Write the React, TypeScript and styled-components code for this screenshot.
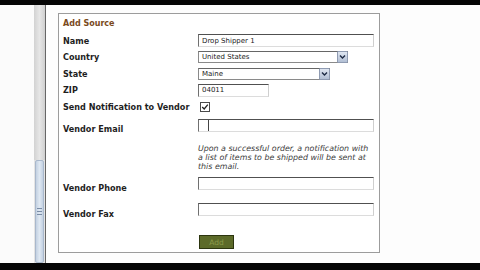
import React from "react";
import styled, { createGlobalStyle } from "styled-components";

const Global = createGlobalStyle`
  html, body { margin: 0; padding: 0; background: #fdfdfd; }
  body { font-family: "DejaVu Sans", Verdana, sans-serif; }
`;

const Screen = styled.div`
  width: 480px;
  height: 270px;
  display: flex;
  flex-direction: column;
  overflow: hidden;
  background: #fdfdfd;
`;

const BlackBar = styled.div<{ $h: number }>`
  height: ${(p) => p.$h}px;
  background: #050505;
  flex: none;
`;

const Middle = styled.div`
  flex: 1;
  display: flex;
  min-height: 0;
`;

const Gutter = styled.div`
  width: 34px;
  background: #fbfbfb;
  flex: none;
`;

const Track = styled.div`
  width: 11px;
  display: flex;
  flex-direction: column;
  background: #e4e4e4;
  flex: none;
`;

const TrackUpper = styled.div`
  height: 155px;
  background: linear-gradient(90deg, #d2d2d2, #e6e6e6 50%, #cfcfcf);
`;

const Thumb = styled.div`
  flex: 1;
  margin: 0 1px;
  border: 1px solid #a9b8cc;
  border-radius: 2px;
  background: linear-gradient(90deg, #c3d1e2, #dfe8f2 50%, #c3d1e2);
  display: flex;
  align-items: center;
  justify-content: center;
`;

const Grip = styled.div`
  width: 5px;
  height: 5px;
  border-top: 1px solid #7a8ca6;
  border-bottom: 1px solid #7a8ca6;
  position: relative;
  &::after {
    content: "";
    position: absolute;
    left: 0;
    right: 0;
    top: 2px;
    border-top: 1px solid #7a8ca6;
  }
`;

const Divider = styled.div`
  width: 1px;
  background: #666;
  flex: none;
`;

const Content = styled.div`
  flex: 1;
  padding: 8px 0 0 12px;
  background: #fdfdfd;
`;

const Panel = styled.div`
  border: 1px solid #9c9c9c;
  background: #ffffff;
  padding-left: 4px;
  box-sizing: border-box;
  width: 322px;
  height: 240px;
  display: flex;
  flex-direction: column;
`;

const Title = styled.div`
  height: 17px;
  display: flex;
  align-items: center;
  font-size: 8px;
  font-weight: bold;
  color: #7a4a1c;
  padding-top: 1px;
`;

const Row = styled.div<{ $h: number; $align?: string }>`
  height: ${(p) => p.$h}px;
  display: grid;
  grid-template-columns: 135px 1fr;
  align-items: ${(p) => p.$align || "center"};
`;

const Label = styled.div<{ $drop?: number }>`
  font-size: 8.1px;
  font-weight: bold;
  color: #1e1e1e;
  padding-top: ${(p) => p.$drop || 0}px;
  white-space: nowrap;
`;

const Field = styled.div<{ $top?: number }>`
  display: flex;
  align-items: center;
  padding-top: ${(p) => p.$top || 0}px;
`;

const TextBox = styled.div<{ $w: number }>`
  width: ${(p) => p.$w}px;
  height: 13px;
  box-sizing: border-box;
  border-top: 1px solid #505050;
  border-left: 1px solid #707070;
  border-right: 1px solid #cfcfcf;
  border-bottom: 1px solid #dcdcdc;
  background: #fff;
  font-size: 7px;
  color: #222;
  padding-left: 3px;
  display: flex;
  align-items: center;
  overflow: hidden;
  white-space: nowrap;
`;

const CaretBox = styled.span`
  width: 10px;
  height: 11px;
  margin-left: -3px;
  border-right: 1px solid #444;
  box-sizing: border-box;
`;

const Select = styled.div<{ $w: number }>`
  width: ${(p) => p.$w}px;
  height: 12px;
  box-sizing: border-box;
  border: 1px solid #8a8a8a;
  border-top-color: #666;
  background: #fff;
  font-size: 7px;
  color: #222;
  display: flex;
  align-items: center;
  padding-left: 3px;
  white-space: nowrap;
`;

const SelectText = styled.span`
  flex: 1;
`;

const Arrow = styled.span`
  width: 11px;
  height: 12px;
  flex: none;
  margin-right: -1px;
  border: 1px solid #8f9bb2;
  border-radius: 1px;
  box-sizing: border-box;
  background: linear-gradient(180deg, #dfe6f1, #b2bfd4);
  display: flex;
  align-items: center;
  justify-content: center;
`;

const Check = styled.span`
  width: 10px;
  height: 10px;
  margin-left: 2px;
  box-sizing: border-box;
  border: 1px solid #4a4a4a;
  background: #fff;
  display: flex;
  align-items: center;
  justify-content: center;
`;

const Help = styled.div`
  font-size: 7.9px;
  font-style: italic;
  line-height: 9px;
  color: #3a3a3a;
  padding-top: 9px;
  width: 175px;
`;

const AddButton = styled.div`
  margin-left: 1px;
  width: 35px;
  height: 14px;
  box-sizing: border-box;
  border: 1px solid #2c350f;
  background: #5c6a29;
  color: #8c9c49;
  font-size: 7.5px;
  display: flex;
  align-items: center;
  justify-content: center;
`;

const Chevron = () => (
  <svg width="7" height="6" viewBox="0 0 7 6">
    <path d="M1 1.5 L3.5 4 L6 1.5" stroke="#1d2a44" strokeWidth="1.4" fill="none" />
  </svg>
);

export default function App() {
  return (
    <Screen>
      <Global />
      <BlackBar $h={5} />
      <Middle>
        <Gutter />
        <Track>
          <TrackUpper />
          <Thumb>
            <Grip />
          </Thumb>
        </Track>
        <Divider />
        <Content>
          <Panel>
            <Title>Add Source</Title>
            <Row $h={17}>
              <Label>Name</Label>
              <Field>
                <TextBox $w={176}>Drop Shipper 1</TextBox>
              </Field>
            </Row>
            <Row $h={16}>
              <Label>Country</Label>
              <Field>
                <Select $w={150}>
                  <SelectText>United States</SelectText>
                  <Arrow>
                    <Chevron />
                  </Arrow>
                </Select>
              </Field>
            </Row>
            <Row $h={17}>
              <Label>State</Label>
              <Field>
                <Select $w={132}>
                  <SelectText>Maine</SelectText>
                  <Arrow>
                    <Chevron />
                  </Arrow>
                </Select>
              </Field>
            </Row>
            <Row $h={16}>
              <Label>ZIP</Label>
              <Field>
                <TextBox $w={71}>04011</TextBox>
              </Field>
            </Row>
            <Row $h={17}>
              <Label>Send Notification to Vendor</Label>
              <Field>
                <Check>
                  <svg width="8" height="8" viewBox="0 0 8 8">
                    <path d="M1.2 4 L3.2 6 L6.8 1.6" stroke="#222" strokeWidth="1.3" fill="none" />
                  </svg>
                </Check>
              </Field>
            </Row>
            <Row $h={20}>
              <Label $drop={8}>Vendor Email</Label>
              <Field>
                <TextBox $w={176}>
                  <CaretBox />
                </TextBox>
              </Field>
            </Row>
            <Row $h={41} $align="start">
              <span />
              <Help>
                Upon a successful order, a notification with a list of items to be shipped will be sent at
                this email.
              </Help>
            </Row>
            <Row $h={16} $align="start">
              <Label $drop={7}>Vendor Phone</Label>
              <Field $top={1}>
                <TextBox $w={176} />
              </Field>
            </Row>
            <Row $h={35} $align="start">
              <Label $drop={17}>Vendor Fax</Label>
              <Field $top={11}>
                <TextBox $w={176} />
              </Field>
            </Row>
            <Row $h={16} $align="start">
              <span />
              <Field $top={8}>
                <AddButton>Add</AddButton>
              </Field>
            </Row>
          </Panel>
        </Content>
      </Middle>
      <BlackBar $h={7} />
    </Screen>
  );
}
